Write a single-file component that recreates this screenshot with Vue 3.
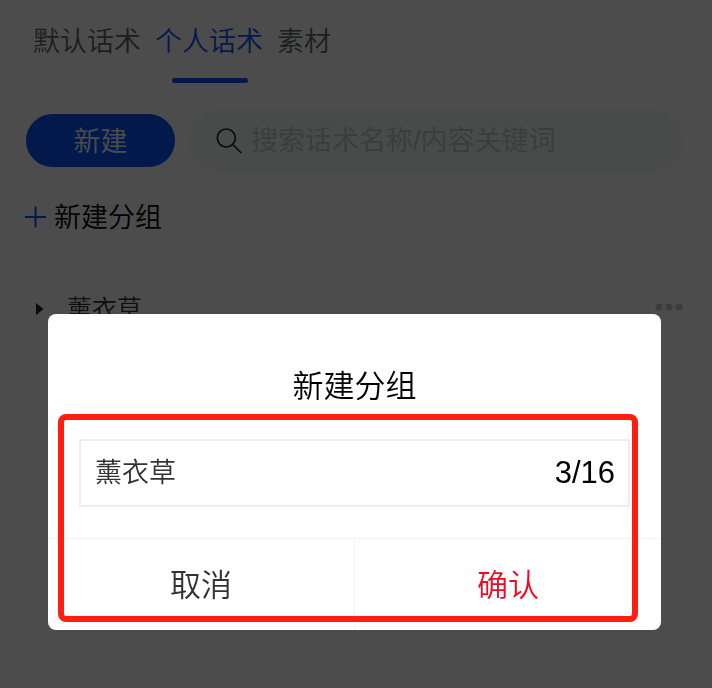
<template>
  <div class="page">

    <!-- Tabs -->
    <nav class="tabs">
      <a
        v-for="tab in tabs"
        :key="tab"
        href="#"
        :class="['tab', { active: tab === activeTab }]"
        @click.prevent="activeTab = tab"
      >{{ tab }}</a>
    </nav>

    <!-- Toolbar -->
    <div class="toolbar">
      <button type="button" class="create-btn">新建</button>
      <label class="search">
        <svg class="search-icon" viewBox="0 0 26 26" fill="none" stroke="#222" stroke-width="1.7">
          <circle cx="10.3" cy="10" r="9" />
          <path d="M16.8 16.5L25.3 25" />
        </svg>
        <input v-model="keyword" type="text" class="search-input" placeholder="搜索话术名称/内容关键词" aria-label="搜索" />
      </label>
    </div>

    <button type="button" class="add-group" @click="showDialog = true">
      <svg class="plus-icon" viewBox="0 0 22 22" fill="none" stroke="#0a56ff" stroke-width="2">
        <path d="M1 11H22M11.5 0.5V21.5" />
      </svg>
      <span>新建分组</span>
    </button>

    <!-- Group list -->
    <ul class="groups">
      <li v-for="group in groups" :key="group" class="group">
        <svg class="caret" viewBox="0 0 8 12" fill="#222"><path d="M0 0L7.5 6L0 12Z" /></svg>
        <span class="group-name">{{ group }}</span>
        <button type="button" class="more-btn" aria-label="更多">
          <svg class="more-icon" viewBox="0 0 28 8" fill="#c8c9cc">
            <circle cx="4" cy="4" r="3.6" />
            <circle cx="14" cy="4" r="3.6" />
            <circle cx="24" cy="4" r="3.6" />
          </svg>
        </button>
      </li>
    </ul>

    <!-- New group dialog -->
    <div v-if="showDialog" class="overlay">
      <div class="dialog" role="dialog" aria-labelledby="dialog-title">
        <h2 id="dialog-title" class="dialog-title">新建分组</h2>
        <div class="field">
          <input v-model="groupName" type="text" class="field-input" :maxlength="maxLength" aria-labelledby="dialog-title" />
          <span class="count">{{ groupName.length }}/{{ maxLength }}</span>
        </div>
        <div class="actions">
          <button type="button" class="action" @click="showDialog = false">取消</button>
          <button type="button" class="action confirm" @click="showDialog = false">确认</button>
        </div>
        <div class="highlight" />
      </div>
    </div>

  </div>
</template>

<script setup>
import { ref } from 'vue'

const tabs = ['默认话术', '个人话术', '素材']
const activeTab = ref('个人话术')
const keyword = ref('')
const groups = ref(['薰衣草'])

const showDialog = ref(true)
const groupName = ref('薰衣草')
const maxLength = 16
</script>

<style>
body {
  margin: 0;
  background: #fff;
}
</style>

<style scoped>
.page {
  min-height: 100vh;
  box-sizing: border-box;
  background: #fff;
  color: #000;
  font-family: 'Liberation Sans', 'Noto Sans CJK SC', sans-serif;
  font-size: 27px;
  font-weight: 350;
  line-height: 40px;
}

button,
input {
  margin: 0;
  padding: 0;
  border: none;
  background: none;
  color: inherit;
  font: inherit;
  outline: none;
}
button { cursor: pointer; }

/* Tabs */
.tabs {
  display: flex;
  gap: 14px;
  padding: 22px 33px 0;
}
.tab {
  position: relative;
  padding-bottom: 21px;
  color: #646566;
  text-decoration: none;
}
.tab.active { color: #0a56ff; }
.tab.active::after {
  content: '';
  position: absolute;
  left: 17px;
  right: 15px;
  bottom: 0;
  height: 5px;
  border-radius: 3px;
  background: #0a56ff;
}

/* Toolbar */
.toolbar {
  display: flex;
  align-items: center;
  gap: 15px;
  padding: 26px 30px 0 26px;
}
.create-btn {
  width: 149px;
  height: 53px;
  padding-top: 2px;
  border-radius: 27px;
  background: #0a56ff;
  color: #fff;
}
.search {
  flex: 1;
  display: flex;
  align-items: center;
  gap: 9px;
  height: 63px;
  padding: 0 26px;
  border-radius: 32px;
  background: #f0faf7;
}
.search-icon {
  width: 26px;
  height: 26px;
}
.search-input {
  flex: 1;
  min-width: 0;
}
.search-input::placeholder {
  color: #c8c9cc;
  opacity: 1;
}

/* New group link */
.add-group {
  display: flex;
  align-items: center;
  gap: 8px;
  margin: 24px 24px 0;
}
.add-group span { padding-top: 2px; }
.plus-icon {
  width: 22px;
  height: 22px;
}

/* Groups */
.groups {
  list-style: none;
  margin: 0;
  padding: 51px 29px 0 36px;
}
.group {
  display: flex;
  align-items: center;
  height: 40px;
}
.caret {
  width: 8px;
  height: 12px;
  margin-right: 23px;
}
.group-name {
  flex: 1;
  color: #323233;
  font-size: 25px;
}
.more-btn {
  display: flex;
  padding-bottom: 4px;
}
.more-icon {
  width: 28px;
  height: 8px;
}

/* Dialog */
.overlay {
  position: fixed;
  inset: 0;
  padding: 314px 51px 0 48px;
  background: rgba(0, 0, 0, 0.7);
}
.dialog {
  position: relative;
  border-radius: 8px;
  background: #fff;
  font-size: 31px;
  overflow: hidden;
}
.dialog-title {
  margin: 0;
  padding: 53px 31px 32px;
  font-size: 31px;
  font-weight: 350;
  text-align: center;
}
.field {
  display: flex;
  align-items: center;
  height: 64px;
  margin: 0 31px;
  padding: 0 13px 0 14px;
  border: 2px solid #ebedf0;
}
.field-input {
  flex: 1;
  min-width: 0;
  color: #323233;
  font-size: 27px;
}
.actions {
  display: flex;
  margin-top: 31px;
  border-top: 1px solid #f2f3f5;
}
.action {
  flex: 1;
  height: 91px;
  padding-top: 2px;
  color: #323233;
}
.confirm {
  border-left: 1px solid #f2f3f5;
  color: #ee0a24;
}

/* Red marker around the form */
.highlight {
  position: absolute;
  inset: 100px 23px 8px 10px;
  border: 6px solid #ff1e10;
  border-radius: 8px;
  pointer-events: none;
}
</style>
